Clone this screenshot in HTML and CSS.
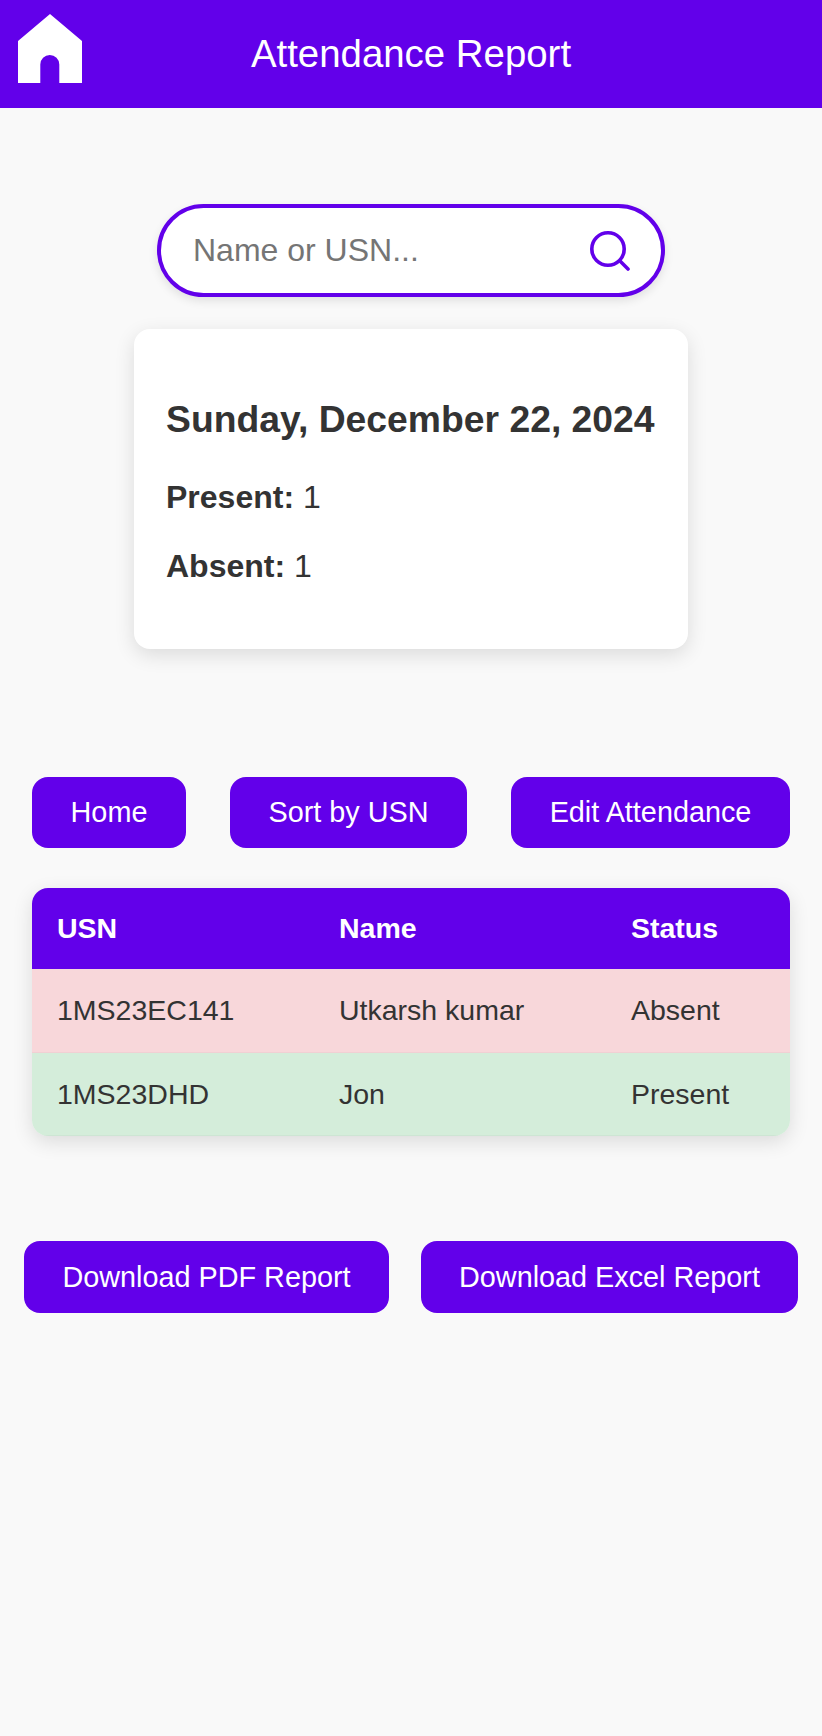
FILE: index.html
```html
<!DOCTYPE html>
<html lang="en">
<head>
    <meta charset="UTF-8">
    <meta name="viewport" content="width=device-width, initial-scale=1.0">
    <title>Attendance Report</title>
    <link rel="stylesheet" href="styles.css">
</head>
<body>
    <header class="top-bar">
        <a class="home-link" href="#" aria-label="Home">
            <svg viewBox="0 0 64 69" width="64" height="69">
                <path fill="#fff" d="M32 0 L64 27 V69 H41.300 V50.500 A9.500 9.500 0 0 0 22.300 50.500 V69 H0 V27 Z"/>
            </svg>
        </a>
        <h1>Attendance Report</h1>
    </header>

    <div class="search-box">
        <input type="text" placeholder="Name or USN...">
        <svg class="search-icon" viewBox="0 0 40 40" width="40" height="40">
            <circle cx="18" cy="18" r="16.200" fill="none" stroke="#6200ea" stroke-width="3.600"/>
            <path d="M30 30 L38 38" fill="none" stroke="#6200ea" stroke-width="3.600" stroke-linecap="round"/>
        </svg>
    </div>

    <div class="summary-card">
        <h2>Sunday, December 22, 2024</h2>
        <p><strong>Present:</strong> 1</p>
        <p><strong>Absent:</strong> 1</p>
    </div>

    <div class="actions">
        <button class="btn btn-home">Home</button>
        <button class="btn btn-sort">Sort by USN</button>
        <button class="btn btn-edit">Edit Attendance</button>
    </div>

    <table class="report">
        <thead>
            <tr>
                <th class="col-usn">USN</th>
                <th class="col-name">Name</th>
                <th>Status</th>
            </tr>
        </thead>
        <tbody>
            <tr class="absent">
                <td>1MS23EC141</td>
                <td>Utkarsh kumar</td>
                <td>Absent</td>
            </tr>
            <tr class="present">
                <td>1MS23DHD</td>
                <td>Jon</td>
                <td>Present</td>
            </tr>
        </tbody>
    </table>

    <div class="downloads">
        <button class="btn btn-pdf">Download PDF Report</button>
        <button class="btn btn-excel">Download Excel Report</button>
    </div>
</body>
</html>
```

FILE: styles.css
```css
body {
    margin: 0;
    min-height: 1736px;
    font-family: "Liberation Sans", Arial, sans-serif;
    background-color: #f9f9f9;
    color: #333;
}
.top-bar {
    height: 108px;
    box-sizing: border-box;
    padding: 13.500px 18px 0;
    background-color: #6200ea;
    display: grid;
    grid-template-columns: 1fr auto 1fr;
}
.home-link {
    display: block;
    height: 69px;
}
.top-bar h1 {
    margin: 0;
    padding-top: 18.500px;
    font-size: 38.400px;
    line-height: 44px;
    font-weight: 400;
    color: white;
}
.search-box {
    width: 508px;
    height: 93px;
    box-sizing: border-box;
    margin: 96px auto 0;
    padding: 0 31px 0 32px;
    display: flex;
    align-items: center;
    background: white;
    border: 4px solid #6200ea;
    border-radius: 47px;
    box-shadow: 0 4px 10px rgba(0, 0, 0, 0.1);
}
.search-box input {
    flex: 1;
    min-width: 0;
    border: none;
    outline: none;
    padding: 0;
    font-family: inherit;
    font-size: 32px;
    color: #333;
}
.search-icon {
    flex: none;
}
.summary-card {
    width: 554px;
    height: 320px;
    box-sizing: border-box;
    margin: 32px auto 0;
    padding: 69px 32px 0;
    background: white;
    border-radius: 16px;
    box-shadow: 0 6px 20px rgba(0, 0, 0, 0.12);
}
.summary-card h2 {
    margin: 0 0 38px;
    font-size: 37.300px;
    line-height: 43px;
    white-space: nowrap;
}
.summary-card p {
    margin: 0 0 32px;
    font-size: 32px;
    line-height: 37px;
}
.actions {
    width: 758px;
    margin: 128px auto 0;
    display: flex;
    justify-content: space-between;
}
.btn {
    height: 71px;
    padding: 0;
    border: none;
    border-radius: 16px;
    background-color: #6200ea;
    color: white;
    font-family: inherit;
    font-size: 28.800px;
    cursor: pointer;
}
.btn-home { width: 154px; }
.btn-sort { width: 237px; }
.btn-edit { width: 279px; }
.report {
    width: 758px;
    margin: 40px auto 0;
    table-layout: fixed;
    border-collapse: separate;
    border-spacing: 0;
    border-radius: 16px;
    overflow: hidden;
    box-shadow: 0 6px 20px rgba(0, 0, 0, 0.12);
}
.report th, .report td {
    padding: 0 0 0 25px;
    text-align: left;
    font-size: 28.500px;
}
.report th {
    height: 81px;
    background-color: #6200ea;
    color: white;
}
.report td {
    height: 82px;
    border-bottom: 1px solid rgba(0, 0, 0, 0.03);
}
.report .absent td {
    height: 83px;
}
.col-usn { width: 257px; }
.col-name { width: 267px; }
.absent td { background-color: #f8d7da; }
.present td { background-color: #d4edda; }
.downloads {
    width: 774px;
    margin: 105px auto 0;
    display: flex;
    justify-content: space-between;
}
.downloads .btn {
    height: 72px;
}
.btn-pdf { width: 365px; }
.btn-excel { width: 377px; }
```
